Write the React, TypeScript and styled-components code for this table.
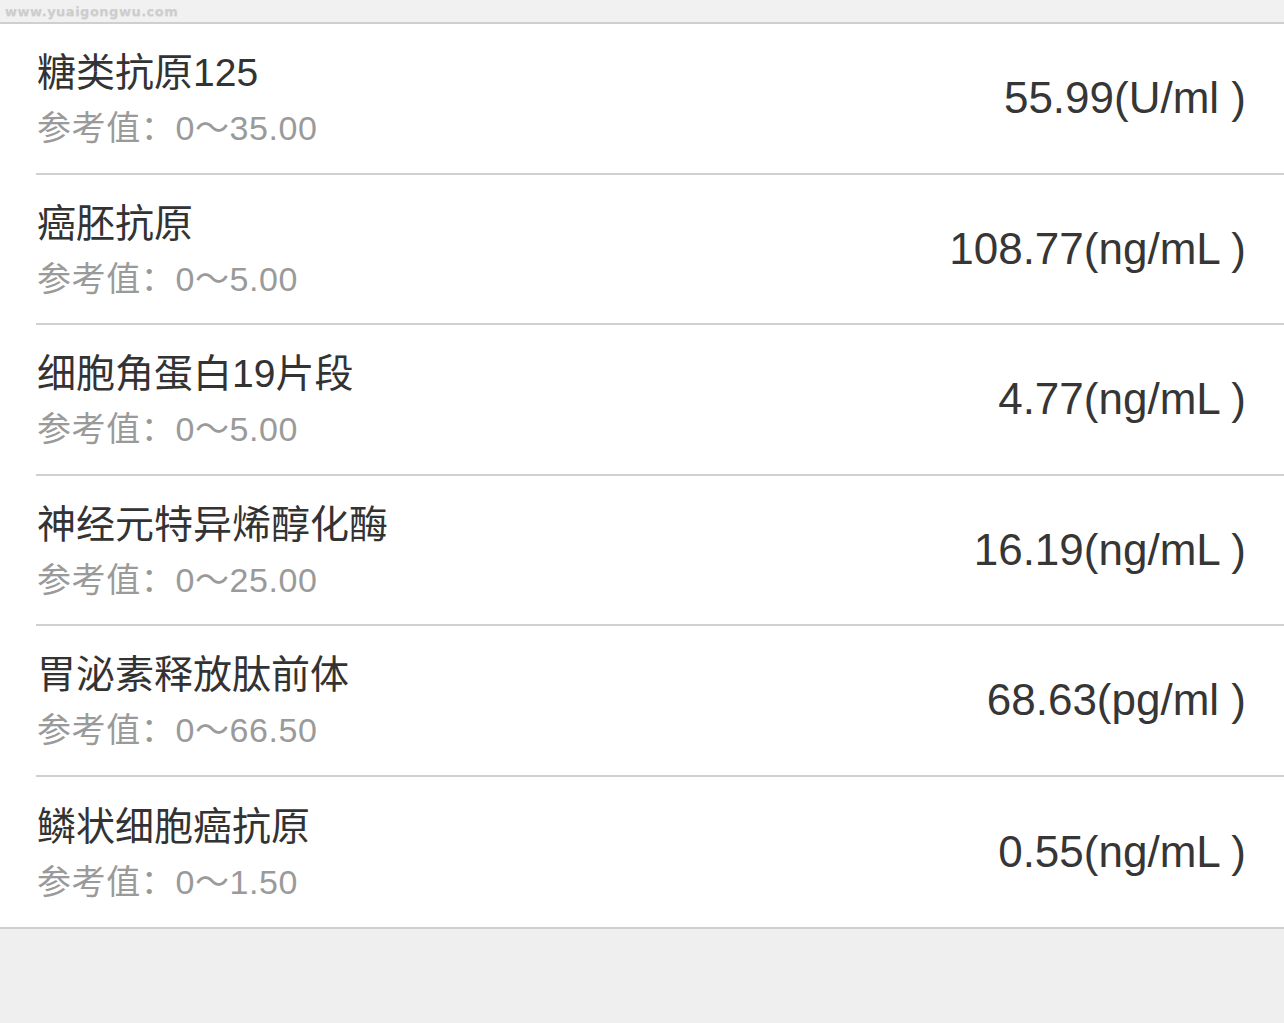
import styled, { createGlobalStyle } from "styled-components";

interface IResultItem {
  name: string;
  range: string;
  value: string;
}

const GlobalStyle = createGlobalStyle`
  html, body {
    margin: 0;
    padding: 0;
    background: #efefef;
  }
  body {
    font-family: "Liberation Sans", "Noto Sans CJK SC", sans-serif;
  }
`;

const Page = styled.div`
  min-height: 1023px;
  background: #efefef;
`;

const TopBar = styled.header`
  height: 22px;
  background: #f1f1f1;
  border-bottom: 2px solid #cfcfcf;
  display: flex;
  align-items: center;
  padding-left: 5px;
`;

const Watermark = styled.span`
  font-family: "DejaVu Sans", sans-serif;
  font-weight: 700;
  font-size: 13px;
  letter-spacing: 0.5px;
  color: #cdcdcd;
  text-shadow: 0 1px 0 #e2e2e2;
`;

const List = styled.section`
  background: #fff;
  border-bottom: 2px solid #cfcfcf;
`;

const Row = styled.article<{ last: boolean }>`
  height: 150.5px;
  margin-left: 36px;
  padding-right: 38px;
  box-sizing: border-box;
  display: flex;
  align-items: center;
  justify-content: space-between;
  border-bottom: ${(props): string => (props.last ? "none" : "2px solid #d0d0d0")};
`;

const Info = styled.div`
  display: flex;
  flex-direction: column;
  padding-left: 1px;
  margin-top: 1px;
`;

const Name = styled.p`
  margin: 0;
  font-family: "Liberation Sans", "Noto Sans CJK SC", sans-serif;
  font-size: 39px;
  line-height: 48px;
  color: #333;
`;

const Range = styled.p`
  margin: 11px 0 0;
  font-family: "Liberation Sans", "Noto Sans CJK SC", sans-serif;
  font-size: 34px;
  line-height: 40px;
  letter-spacing: 0.6px;
  color: #9a9a9a;
`;

const Value = styled.span`
  font-family: "Liberation Sans", "Noto Sans CJK SC", sans-serif;
  font-size: 44px;
  color: #363636;
  white-space: pre;
`;

const results: IResultItem[] = [
  { name: "糖类抗原125", range: "0～35.00", value: "55.99(U/ml )" },
  { name: "癌胚抗原", range: "0～5.00", value: "108.77(ng/mL )" },
  { name: "细胞角蛋白19片段", range: "0～5.00", value: "4.77(ng/mL )" },
  { name: "神经元特异烯醇化酶", range: "0～25.00", value: "16.19(ng/mL )" },
  { name: "胃泌素释放肽前体", range: "0～66.50", value: "68.63(pg/ml )" },
  { name: "鳞状细胞癌抗原", range: "0～1.50", value: "0.55(ng/mL )" },
];

const App = (): JSX.Element => {
  return (
    <Page>
      <GlobalStyle />
      <TopBar>
        <Watermark>www.yuaigongwu.com</Watermark>
      </TopBar>
      <List>
        {results.map((item, index) => {
          return (
            <Row key={item.name} last={index === results.length - 1}>
              <Info>
                <Name>{item.name}</Name>
                <Range>参考值：{item.range}</Range>
              </Info>
              <Value>{item.value}</Value>
            </Row>
          );
        })}
      </List>
    </Page>
  );
};

export default App;
